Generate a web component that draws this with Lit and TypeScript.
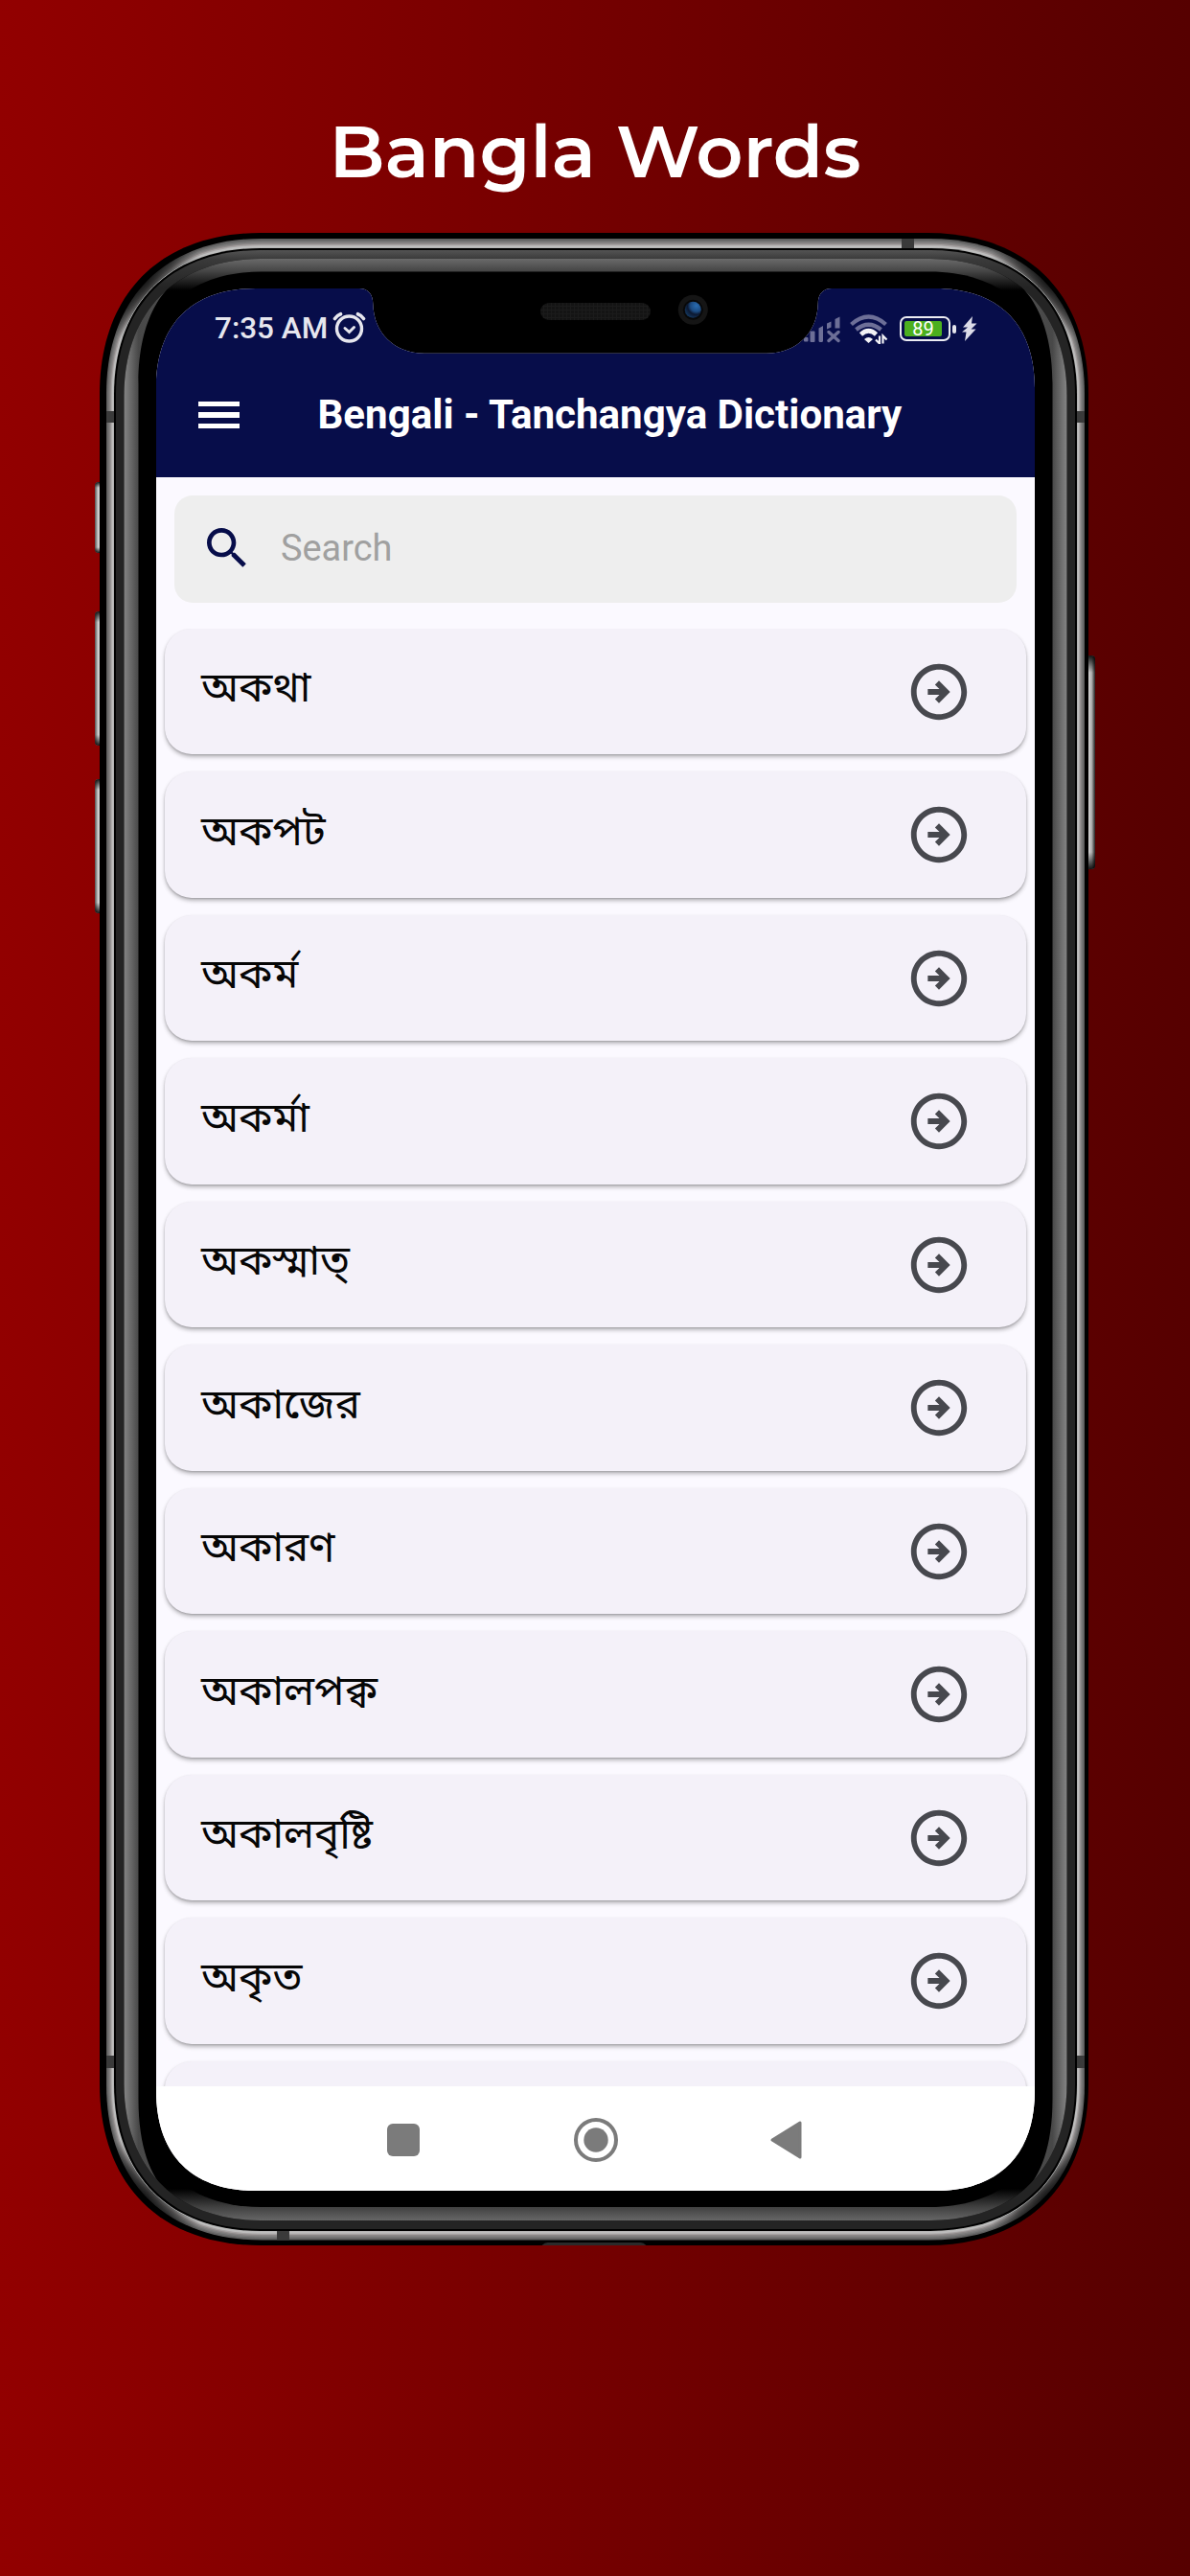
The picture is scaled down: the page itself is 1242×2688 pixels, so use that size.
import { LitElement, html, css, svg } from "lit";
import { customElement } from "lit/decorators.js";

/** Rounded rectangle with softened (continuous) corners. */
const shape = (x0: number, y0: number, x1: number, y1: number, r: number, k = 0.62) => {
  const c = r * (1 - k);
  return `M${x0 + r} ${y0}H${x1 - r}C${x1 - c} ${y0} ${x1} ${y0 + c} ${x1} ${y0 + r}V${y1 - r}C${x1} ${y1 - c} ${x1 - c} ${y1} ${x1 - r} ${y1}H${x0 + r}C${x0 + c} ${y1} ${x0} ${y1 - c} ${x0} ${y1 - r}V${y0 + r}C${x0} ${y0 + c} ${x0 + c} ${y0} ${x0 + r} ${y0}Z`;
};

const steps = ["#5e5e5e", "#6c6c6c", "#7b7b7b", "#8c8888", "#a6a2a2", "#bdbdbd", "#c4c4c2"];
const crescent =
  "M192 275V287C172 299 144.500 330 144.500 400V2190C144.500 2255 165 2285 190 2300V2330H100V275Z";

@customElement("phone-frame")
export class PhoneFrame extends LitElement {
  static styles = css`
    :host { display: block; }
    svg { display: block; width: 100%; height: 100%; }
  `;

  render() {
    const n = steps.length;
    return html`<svg viewBox="94 237 1054 2112" preserveAspectRatio="none">
      <defs>
        <linearGradient id="key" x1="0" x2="1" y1="0" y2="0">
          <stop offset="0" stop-color="#555" /><stop offset=".35" stop-color="#d0d0d0" />
          <stop offset=".65" stop-color="#aaa" /><stop offset="1" stop-color="#222" />
        </linearGradient>
        <linearGradient id="keyEnds" x1="0" x2="0" y1="0" y2="1">
          <stop offset="0" stop-color="#000" stop-opacity=".9" /><stop offset=".08" stop-color="#000" stop-opacity="0" />
          <stop offset=".92" stop-color="#000" stop-opacity="0" /><stop offset="1" stop-color="#000" stop-opacity=".9" />
        </linearGradient>
        <linearGradient id="rim" gradientUnits="userSpaceOnUse" x1="0" x2="0" y1="261" y2="300">
          <stop offset="0" stop-color="#545454" /><stop offset=".24" stop-color="#3a3a3a" /><stop offset="1" stop-color="#242424" />
        </linearGradient>
        <linearGradient id="lipTop" gradientUnits="userSpaceOnUse" x1="0" x2="0" y1="270" y2="303">
          <stop offset="0" stop-color="#6a6a6a" /><stop offset=".4" stop-color="#444" /><stop offset="1" stop-color="#000" />
        </linearGradient>
        <linearGradient id="lipBottom" gradientUnits="userSpaceOnUse" x1="0" x2="0" y1="2284" y2="2317">
          <stop offset="0" stop-color="#000" /><stop offset=".58" stop-color="#414141" /><stop offset="1" stop-color="#666" />
        </linearGradient>
        <linearGradient id="side" gradientUnits="userSpaceOnUse" x1="129.500" x2="190" y1="0" y2="0">
          <stop offset="0" stop-color="#848484" /><stop offset=".25" stop-color="#484848" /><stop offset="1" stop-color="#505050" />
        </linearGradient>
        <radialGradient id="shade">
          <stop offset="0" stop-color="#000" stop-opacity=".75" /><stop offset=".5" stop-color="#000" stop-opacity=".5" />
          <stop offset="1" stop-color="#000" stop-opacity="0" />
        </radialGradient>
        <radialGradient id="lens" cx=".7" cy=".25" r=".9">
          <stop offset="0" stop-color="#2a6cb0" /><stop offset=".4" stop-color="#1b4a80" />
          <stop offset=".6" stop-color="#0c1830" /><stop offset="1" stop-color="#16426e" />
        </radialGradient>
        <clipPath id="outer"><path d=${shape(104, 243, 1136, 2343, 168)} /></clipPath>
        <clipPath id="inner"><path d=${shape(129.5, 270, 1113.5, 2317, 143)} /></clipPath>
        <pattern id="mesh" width="4" height="4" patternUnits="userSpaceOnUse">
          <rect width="4" height="4" fill="#1b1b1b" /><rect width="3" height="3" fill="#141414" />
        </pattern>
      </defs>
      ${[[503, 577], [638, 778], [813, 953]].map(
        ([a, b]) => svg`<rect x="99" y=${a} width="10" height=${b - a} rx="4" fill="url(#key)" />
          <rect x="99" y=${a} width="10" height=${b - a} rx="4" fill="url(#keyEnds)" />`
      )}
      <rect x="1133" y="684" width="10" height="223" rx="4" fill="url(#key)" />
      <rect x="1133" y="684" width="10" height="223" rx="4" fill="url(#keyEnds)" />
      <path d=${shape(104, 243, 1136, 2343, 168)} fill="#000" />
      ${steps.map((color, i) => {
        const t = i / n;
        return svg`<path d=${shape(111 + 8 * t, 249 + 10 * t, 1132 - 8 * t, 2337.5 - 9.5 * t, 162 - 8 * t)} fill=${color} />`;
      })}
      <g clip-path="url(#outer)">
        ${[[148, 292], [1095, 292], [148, 2295], [1095, 2295]].map(
          ([x, y]) => svg`<circle cx=${x} cy=${y} r="66" fill="url(#shade)" />`
        )}
      </g>
      <path d=${shape(118.5, 258.5, 1124.5, 2328.5, 154)} fill="none" stroke="#b4b4b4" stroke-width="1" />
      <path d="M111 429h8v12h-8zM111 2145h8v13h-8zM1124 429h8v12h-8zM1124 2145h8v13h-8zM941 249h13v10h-13zM289 2328h13v9.500h-13z" fill="#3a3a3a" />
      <path d=${shape(119, 259, 1124, 2328, 153)} fill="#000" />
      <path d=${shape(121, 261, 1122, 2326, 151)} fill="url(#rim)" />
      <g clip-path="url(#inner)">
        <rect x="129" y="269" width="986" height="2050" fill="#000" />
        <rect x="129" y="269" width="986" height="34" fill="url(#lipTop)" />
        <rect x="129" y="2284" width="986" height="34" fill="url(#lipBottom)" />
      </g>
      <path d=${shape(144.5, 283.5, 1098.5, 2303, 128)} fill="#000" />
      <g clip-path="url(#inner)">
        <path d=${crescent} fill="url(#side)" />
        <path d=${crescent} fill="url(#side)" transform="matrix(-1 0 0 1 1243 0)" />
      </g>
      <rect x="564" y="316" width="115" height="18" rx="9" fill="url(#mesh)" />
      <circle cx="723.300" cy="323.300" r="15.500" fill="#151515" />
      <circle cx="723.300" cy="323.300" r="10.500" fill="#080808" />
      <circle cx="723.300" cy="323.300" r="8.500" fill="url(#lens)" />
      <path d="M565.500 2343q3-3 6-3h97q3 0 6 3z" fill="#2a2a2a" />
    </svg>`;
  }
}

@customElement("status-bar")
export class StatusBar extends LitElement {
  static styles = css`
    :host { display: flex; align-items: center; height: 84px; padding: 0 60px 0 61px; box-sizing: border-box; color: #e6e6ee; font: 500 31.500px/36px Roboto, "Liberation Sans", sans-serif; }
    .alarm { width: 35px; height: 33px; margin: -4px auto 0 5px; }
    .signal { width: 42px; height: 32px; margin-right: 9px; }
    .wifi { width: 42px; height: 32px; margin-right: 11px; }
    .battery { display: flex; align-items: center; justify-content: center; width: 53px; height: 26px; border: 2.500px solid #ececf2; border-radius: 7px; box-sizing: border-box; padding: 2.500px 3px; }
    .level { display: flex; align-items: center; justify-content: center; flex: 1; height: 16px; margin-right: 4px; border-radius: 2px; background: #4caf1e; color: #fff; font-size: 20px; font-weight: 400; line-height: 16px; }
    .cap { width: 4px; height: 9px; margin: 0 5.500px 0 1.500px; border-radius: 2px; background: #e6e6ee; }
    .bolt { width: 17px; height: 28px; }
  `;

  render() {
    return html`<span>7:35 AM</span>
      <svg class="alarm" viewBox="0 0 35 33" fill="none" stroke="#e6e6ee" stroke-linecap="round">
        <circle cx="17.500" cy="18" r="13" stroke-width="3.400" />
        <path d="M13 17.500l4.500 4 5-5" stroke-width="3" /><path d="M2.500 7.500Q5 4 8.500 2.700M32.500 7.500Q30 4 26.500 2.700" stroke-width="3.600" />
      </svg>
      <svg class="signal" viewBox="0 0 42 32" fill="#6d6f97">
        <rect x="4" y="25" width="4.500" height="4.500" rx="1" /><rect x="10.500" y="18.500" width="5" height="11.500" rx="1" />
        <path d="M19.500 15.500l4.500-2.500v15.500q0 1.500-1.500 1.500h-1.500q-1.500 0-1.500-1.500zM28 10.500l4.500-2v6l-4.500 2zM36.500 6l5-2.500v12h-5z" />
        <path d="M30 19.500l10 9M40 19.500L30 28.500" stroke="#6d6f97" stroke-width="3.400" stroke-linecap="round" />
      </svg>
      <svg class="wifi" viewBox="0 0 42 32" fill="none">
        <path d="M2.500 11.500Q20.500-4.500 38.500 11.500M7.500 17Q20.500 6.500 33.500 17" stroke="#6d6f97" stroke-width="4.200" />
        <path d="M12.500 22Q20.500 14.500 28.500 22" stroke="#f2f2f6" stroke-width="4.600" />
        <path d="M16 27Q20.500 23 25 27L20.500 31z" fill="#f2f2f6" />
        <path d="M32 23.500v8l-4-4M35.500 31.500v-8l4 4" stroke="#f2f2f6" stroke-width="2.200" />
      </svg>
      <div class="battery"><div class="level">89</div></div>
      <div class="cap"></div>
      <svg class="bolt" viewBox="0 0 17 28" fill="#dcdce8"><path d="M12 1L2 12.500h5L1 17.500h4.500L4 27 15.500 14.500H10.500L16.500 8.500H11z" /></svg>`;
  }
}

@customElement("word-card")
export class WordCard extends LitElement {
  static properties = { word: {} };
  declare word: string;

  static styles = css`
    :host { display: flex; align-items: center; justify-content: space-between; flex: none; height: 131.500px; padding: 0 56px 0 38px; box-sizing: border-box; border-radius: 28px; background: #f4f1f9; box-shadow: 0 3px 4px rgba(0, 0, 0, 0.26), 0 1px 2px rgba(0, 0, 0, 0.16); }
    .word { color: #060606; font: 400 43.800px/56px "Noto Sans Bengali", "Noto Sans", sans-serif; padding-bottom: 1px; }
    .go { width: 70px; height: 70px; fill: #47484e; }
  `;

  render() {
    return html`<span class="word">${this.word}</span>
      <svg class="go" viewBox="0 0 24 24"><path d="M22 12c0-5.520-4.480-10-10-10S2 6.480 2 12s4.480 10 10 10 10-4.480 10-10zM4 12c0-4.420 3.580-8 8-8s8 3.580 8 8-3.580 8-8 8-8-3.580-8-8zm12 0-4 4-1.410-1.410L12.170 13H8v-2h4.170l-1.590-1.590L12 8l4 4z" /></svg>`;
  }
}

@customElement("app-root")
export class AppRoot extends LitElement {
  static styles = css`
    :host { display: flex; flex-direction: column; align-items: center; position: relative; width: 1242px; height: 2688px; box-sizing: border-box; overflow: hidden; background: linear-gradient(90deg, #920000 0%, #560000 100%); font-family: Roboto, "Liberation Sans", sans-serif; }
    h1 { margin: 0; padding-top: 108px; height: 193px; box-sizing: border-box; color: #fff; font: 600 76.400px/100px Montserrat, Inter, sans-serif; white-space: nowrap; }
    phone-frame { position: absolute; left: 94px; top: 237px; width: 1054px; height: 2112px; }
    .screen { position: relative; display: flex; flex-direction: column; width: 917px; height: 1985px; margin: 108px 0 0 1px; background: #fbf9ff; overflow: hidden; clip-path: path("M104 0H212C221 0 226.300 6 226.300 16C227 46 248 67.700 280 67.700H637C669 67.700 690 46 690.700 16C690.700 6 696 0 705 0H813C879.600 0 917 37.400 917 104V1881C917 1947.600 879.600 1985 813 1985H104C37.400 1985 0 1947.600 0 1881V104C0 37.400 37.400 0 104 0Z"); }
    .top { display: flex; flex-direction: column; flex: none; height: 196.700px; background: #070d4a; }
    .bar { display: flex; align-items: center; height: 96px; padding-left: 44px; color: #fff; }
    .menu { display: flex; flex-direction: column; gap: 6.700px; width: 42.500px; margin-right: 82px; }
    .menu i { height: 5.100px; background: #fff; }
    .title { font-size: 42.100px; font-weight: 700; line-height: 50px; white-space: nowrap; }
    .search { display: flex; align-items: center; flex: none; height: 112px; margin: 19.300px 19px 27px 18.500px; padding: 0 0 2px 27.500px; border-radius: 19px; background: #eeeeee; color: #a0a0a0; font-size: 37.900px; line-height: 44px; box-sizing: border-box; }
    .glass { width: 56px; height: 56px; margin-right: 28px; fill: #070d4a; }
    .list { display: flex; flex-direction: column; gap: 18px; flex: 1; min-height: 0; padding: 0 9px; overflow: hidden; }
    .nav { display: flex; align-items: center; justify-content: center; flex: none; height: 108.700px; padding-top: 2px; box-sizing: border-box; background: #fff; }
    .nav svg { width: 600px; height: 60px; }
  `;

  words = ["অকথা", "অকপট", "অকর্ম", "অকর্মা", "অকস্মাত্", "অকাজের", "অকারণ", "অকালপক্ব", "অকালবৃষ্টি", "অকৃত", ""];

  render() {
    return html`<h1>Bangla Words</h1>
      <phone-frame></phone-frame>
      <div class="screen">
        <div class="top">
          <status-bar></status-bar>
          <div class="bar">
            <div class="menu"><i></i><i></i><i></i></div>
            <div class="title">Bengali - Tanchangya Dictionary</div>
          </div>
        </div>
        <div class="search">
          <svg class="glass" viewBox="0 0 24 24"><path d="M15.500 14h-.79l-.28-.27C15.410 12.590 16 11.110 16 9.500 16 5.910 13.090 3 9.500 3S3 5.910 3 9.500 5.910 16 9.500 16c1.610 0 3.090-.59 4.230-1.570l.27.28v.79l5 4.990L20.490 19l-4.990-5zm-6 0C7.010 14 5 11.990 5 9.500S7.010 5 9.500 5 14 7.010 14 9.500 11.990 14 9.500 14z" /></svg>
          <span>Search</span>
        </div>
        <div class="list">${this.words.map((w) => html`<word-card .word=${w}></word-card>`)}</div>
        <div class="nav">
          <svg viewBox="0 0 600 60" fill="#7b7b7b">
            <rect x="82" y="13" width="34" height="34" rx="6" />
            <circle cx="300" cy="30" r="21" fill="none" stroke="#7b7b7b" stroke-width="4" /><circle cx="300" cy="30" r="12.700" />
            <path d="M484 30L513 12V48z" stroke="#7b7b7b" stroke-width="3" stroke-linejoin="round" />
          </svg>
        </div>
      </div>`;
  }
}
